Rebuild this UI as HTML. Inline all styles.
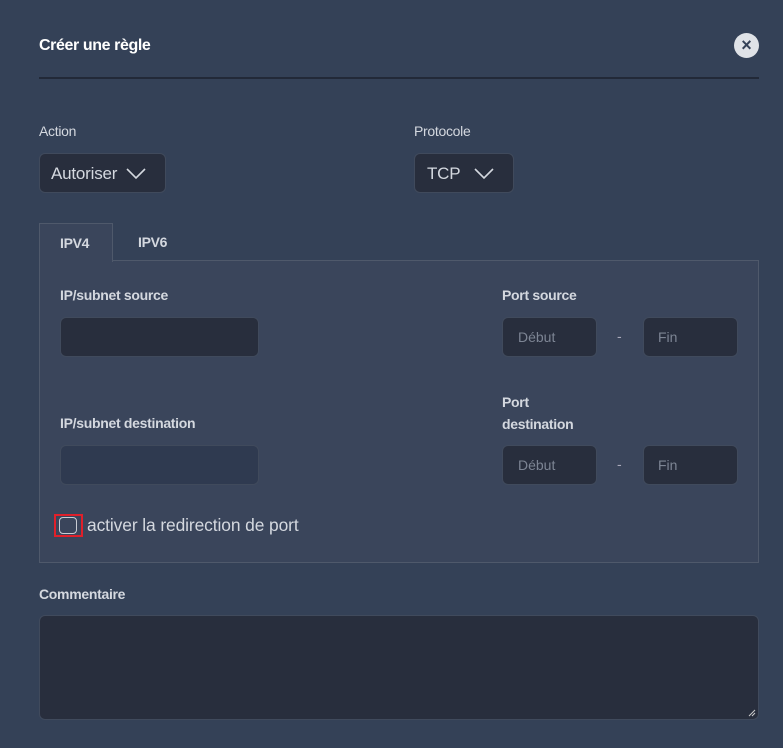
<!DOCTYPE html>
<html><head><meta charset="utf-8"><style>
*{box-sizing:border-box;margin:0;padding:0}
body{width:783px;height:748px;background:#344157;font-family:"Liberation Sans",sans-serif;color:#e4e7ec;position:relative;overflow:hidden}
.a{position:absolute}
.lbl{font-size:14px;font-weight:bold;color:#d4d8df;letter-spacing:-0.3px}
.inp{position:absolute;background:#282e3d;border:1px solid #404a5c;border-radius:6px}
.ph{position:absolute;font-size:14px;color:#7d8594}
</style></head><body>
<div class="a" style="left:39px;top:37px;font-size:16px;font-weight:bold;color:#fff;letter-spacing:-0.4px">Créer une règle</div>
<div class="a" style="left:734px;top:33px;width:25px;height:25px;border-radius:50%;background:#dfe2e7"></div>
<div class="a" style="left:734px;top:33px;width:25px;height:25px;text-align:center;font-size:18px;font-weight:bold;color:#344157;line-height:25px">×</div>
<div class="a" style="left:39px;top:77px;width:720px;height:2px;background:#222938"></div>

<div class="a lbl" style="left:39px;top:123px;font-weight:normal">Action</div>
<div class="a lbl" style="left:414px;top:123px;font-weight:normal">Protocole</div>
<div class="inp" style="left:39px;top:153px;width:127px;height:40px"></div>
<div class="a" style="left:51px;top:164px;font-size:17px;color:#d4d8df;letter-spacing:-0.2px">Autoriser</div>
<svg class="a" style="left:125px;top:167px" width="22" height="14"><path d="M2 2 L11 11 L20 2" stroke="#d4d8df" stroke-width="1.6" fill="none"/></svg>
<div class="inp" style="left:414px;top:153px;width:100px;height:40px"></div>
<div class="a" style="left:427px;top:164px;font-size:17px;color:#d4d8df;letter-spacing:-0.2px">TCP</div>
<svg class="a" style="left:473px;top:167px" width="22" height="14"><path d="M2 2 L11 11 L20 2" stroke="#d4d8df" stroke-width="1.6" fill="none"/></svg>

<div class="a" style="left:39px;top:260px;width:720px;height:303px;background:#3a455b;border:1px solid #4f596b"></div>
<div class="a" style="left:39px;top:223px;width:74px;height:39px;background:#3a455b;border:1px solid #4f596b;border-bottom:none"></div>
<div class="a lbl" style="left:60px;top:235px">IPV4</div>
<div class="a lbl" style="left:138px;top:234px">IPV6</div>

<div class="a lbl" style="left:60px;top:287px">IP/subnet source</div>
<div class="inp" style="left:60px;top:317px;width:199px;height:40px"></div>
<div class="a lbl" style="left:502px;top:287px">Port source</div>
<div class="inp" style="left:502px;top:317px;width:95px;height:40px"></div>
<div class="ph" style="left:518px;top:329px">Début</div>
<div class="a" style="left:617px;top:328px;color:#aab;font-size:14px">-</div>
<div class="inp" style="left:643px;top:317px;width:95px;height:40px"></div>
<div class="ph" style="left:658px;top:329px">Fin</div>

<div class="a lbl" style="left:60px;top:415px">IP/subnet destination</div>
<div class="inp" style="left:60px;top:445px;width:199px;height:40px;background:#2f3a50"></div>
<div class="a lbl" style="left:502px;top:391px;line-height:22px">Port<br>destination</div>
<div class="inp" style="left:502px;top:445px;width:95px;height:40px"></div>
<div class="ph" style="left:518px;top:457px">Début</div>
<div class="a" style="left:617px;top:456px;color:#aab;font-size:14px">-</div>
<div class="inp" style="left:643px;top:445px;width:95px;height:40px"></div>
<div class="ph" style="left:658px;top:457px">Fin</div>

<div class="a" style="left:54px;top:514px;width:29px;height:23px;border:2px solid #e0202a"></div>
<div class="a" style="left:59px;top:517px;width:18px;height:17px;border:1px solid #c8ccd3;border-radius:4px"></div>
<div class="a" style="left:87px;top:515px;font-size:17.4px;color:#d4d8df;letter-spacing:-0.1px">activer la redirection de port</div>

<div class="a lbl" style="left:39px;top:586px">Commentaire</div>
<div class="inp" style="left:39px;top:615px;width:720px;height:105px"></div>
<svg class="a" style="left:748px;top:709px" width="8" height="8"><path d="M1 7 L7 1 M4 7 L7 4" stroke="#ccc" stroke-width="1"/></svg>
</body></html>
